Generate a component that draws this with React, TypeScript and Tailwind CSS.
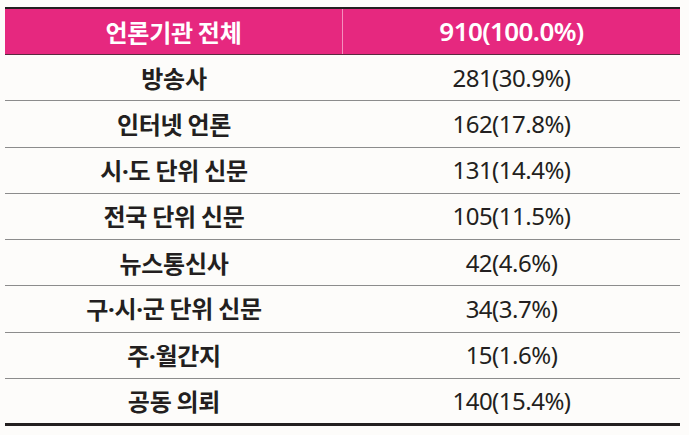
const rows = [
  { name: "방송사", value: "281(30.9%)" },
  { name: "인터넷 언론", value: "162(17.8%)" },
  { name: "시·도 단위 신문", value: "131(14.4%)" },
  { name: "전국 단위 신문", value: "105(11.5%)" },
  { name: "뉴스통신사", value: "42(4.6%)" },
  { name: "구·시·군 단위 신문", value: "34(3.7%)" },
  { name: "주·월간지", value: "15(1.6%)" },
  { name: "공동 의뢰", value: "140(15.4%)" },
];

const krFont = "font-['Noto_Sans_CJK_KR','Noto_Sans',sans-serif]";
const numFont = "font-['Noto_Sans','Open_Sans',sans-serif]";

// narrow middle dot: CJK font draws it full width
function Label({ text }: { text: string }) {
  const parts = text.split("·");
  return (
    <>
      {parts.map((p, i) => (
        <span key={i}>
          {i > 0 && <span className="font-['Noto_Sans',sans-serif]">·</span>}
          {p}
        </span>
      ))}
    </>
  );
}

export default function App() {
  return (
    <div className="w-[689px] h-[435px] bg-[#fdfcfa] pt-[7px] pl-[5px]">
      <div className="w-[675px]">
        {/* Header */}
        <div className="grid grid-cols-[338px_337px] h-[48px] border-t-2 border-b border-t-[#231f20] border-b-[#5a2a3e] bg-[#e6287f] text-white">
          <div className={`flex items-center justify-center border-r border-r-[#f48fbd] text-[24px] font-bold tracking-[-0.3px] ${krFont}`}>
            언론기관 전체
          </div>
          <div className={`flex items-center justify-center text-[26px] font-semibold tracking-[-0.6px] ${numFont}`}>
            910(100.0%)
          </div>
        </div>

        {/* Rows */}
        {rows.map((row, i) => {
          const last = i === rows.length - 1;
          return (
            <div
              key={row.name}
              className={
                last
                  ? "grid grid-cols-[338px_337px] h-[47.25px] border-b-[3px] border-b-[#231f20]"
                  : "grid grid-cols-[338px_337px] h-[46.25px] border-b border-b-[#8c8c8c]"
              }
            >
              <div className={`flex items-center justify-center text-[24px] font-bold tracking-[-0.3px] text-[#231f20] ${krFont}`}>
                <Label text={row.name} />
              </div>
              <div className={`flex items-center justify-center text-[24px] font-normal tracking-[-0.5px] text-[#231f20] ${numFont}`}>
                {row.value}
              </div>
            </div>
          );
        })}
      </div>
    </div>
  );
}
